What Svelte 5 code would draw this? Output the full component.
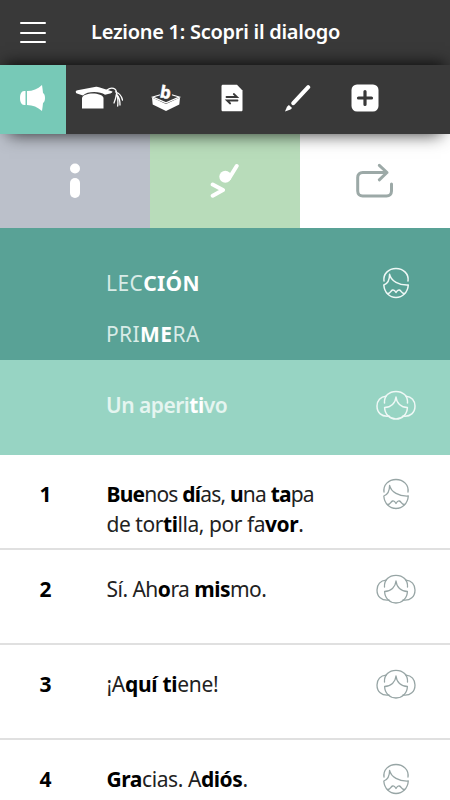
<script lang="ts">
  // Stressed syllables are wrapped in asterisks
  const rows = [
    {
      num: 1,
      who: 'man',
      lines: [
        { text: '*Bue*nos *dí*as, *u*na *ta*pa', tracking: -0.8 },
        { text: 'de tor*ti*lla, por fa*vor*.', tracking: -0.45 }
      ]
    },
    { num: 2, who: 'woman', lines: [{ text: 'Sí. Ah*o*ra *mis*mo.', tracking: -0.53 }] },
    { num: 3, who: 'woman', lines: [{ text: '¡A*quí ti*ene!', tracking: -0.3 }] },
    { num: 4, who: 'man', lines: [{ text: '*Gra*cias. A*diós*.', tracking: -0.42 }] }
  ];
</script>

{#snippet stressed(text: string)}
  {#each text.split('*') as part, i}{#if i % 2}<b>{part}</b>{:else}{part}{/if}{/each}
{/snippet}

{#snippet face(who: string)}
  <svg class="face" width="42" height="32" viewBox="0 0 42 32" aria-hidden="true">
    {#if who === 'man'}
      <path d="M9 14C8 7 13.500 1.500 21 1.500S34 7 33 14" />
      <path d="M14.600 7.300c0 5.500-2 9.500-5.800 10.700.6 7.500 5.700 12.500 12.200 12.500S32.700 25.500 33.300 18C24 18.500 16 14 14.600 7.300z" />
      <path d="M12.500 26.500c3.200 0 3-3 5.200-3.500 1.700-.3 2.300.6 3.300 2.500 1-1.900 1.600-2.800 3.300-2.500 2.200.5 2 3.500 5.200 3.500" />
    {:else}
      <path d="M9.500 14C9 7 14 2.400 21 2.400S33 7 32.500 14" />
      <path d="M21 8c-.5 6-5 10.300-11.400 10.500C9.800 25.500 15 30 21 30s11.200-4.500 11.400-11.500C26 18.300 21.500 14 21 8z" />
      <path d="M11 7.200C5.500 7.500 2 11.500 2 17c0 6.500 4.500 11 12 10" />
      <path d="M31 7.200c5.500.3 9 4.300 9 9.800 0 6.500-4.500 11-12 10" />
    {/if}
  </svg>
{/snippet}

<div class="app">
  <header>
    <button class="menu" aria-label="Menu"><span></span><span></span><span></span></button>
    <h1>Lezione 1: Scopri il dialogo</h1>
  </header>

  <nav>
    <button class="tab active" aria-label="Audio">
      <svg width="26" height="28" viewBox="0 0 26 28">
        <path d="M5.500 7v14H4c-2.500 0-4-3-4-7s1.500-7 4-7z" />
        <path d="M7 7c6 0 10.500-2 15-6 .5 3 .8 5.500 1 8 1.300.8 2 2.500 2 5s-.7 4.200-2 5c-.2 2.500-.5 5-1 8-4.500-4-9-6-15-6z" />
      </svg>
    </button>
    <button class="tab" aria-label="Lessons">
      <svg width="48" height="28" viewBox="0 0 48 28">
        <path d="M.8 7.500c0-.7.700-1 1.700-1.200L21 2.800c1-.2 2 0 3 .4l13.500 4.300c-.3 1.500-1.500 2-3.500 2.300l-4 1C25 7 12 7 8 11.500l-6-2c-1-.4-1.200-1-1.200-2z" />
        <path d="M7 24.500V14c1-6 20.500-6 21.500 0v10.500z" />
        <path class="thin" d="M32 6c4.500-3.500 9.500-2 9.700 3.500M41.500 9.500c-.5 4-1.200 6.500-2.500 9.500M41.700 9.500c1.300 4 1.500 7.500 1 12.500M42 11c2 2 3 5.500 3 10M40.500 8c3.500 1 6 4 7 8" />
      </svg>
    </button>
    <button class="tab" aria-label="Vocabulary">
      <svg class="box" width="30" height="28" viewBox="0 0 30 28">
        <path d="M1 13.500l14 6.500 14-6.500-.7 7L15 27 1.700 20.500z" />
        <path class="thin" d="M8.500 11L1.800 13l13.200 5.800L28.200 13l-6.700-2" />
        <text x="9" y="14.500" transform="rotate(10 15 9)">b</text>
      </svg>
    </button>
    <button class="tab" aria-label="Notes">
      <svg width="22" height="28" viewBox="0 0 22 28">
        <path d="M2 .8h14l5.500 5.700v19.200c0 1-.5 1.500-1.500 1.500H2c-1 0-1.500-.5-1.500-1.500V2.300C.5 1.300 1 .8 2 .8z" />
        <path class="ink" d="M5.500 13h10.500l-3.200-3M16.500 16.500H6l3.200 3" />
      </svg>
    </button>
    <button class="tab" aria-label="Exercises">
      <svg width="26" height="28" viewBox="0 0 26 28">
        <path class="pen" d="M8.300 19.200L23.200 3.200" />
        <path d="M3.900 21l3.200 2.900-1.600 1.600L0 27.500l2-4.700z" />
      </svg>
    </button>
    <button class="tab" aria-label="Add">
      <svg width="28" height="28" viewBox="0 0 28 28">
        <rect x=".5" y=".5" width="27" height="27" rx="5.500" />
        <path class="plus" d="M14 7.500v13M7.500 14h13" />
      </svg>
    </button>
  </nav>

  <div class="tools">
    <button class="tool info" aria-label="Info">
      <svg width="12" height="36" viewBox="0 0 12 36">
        <circle cx="6" cy="5.500" r="5" />
        <rect x="1" y="15" width="10" height="20" rx="5" />
      </svg>
    </button>
    <button class="tool listen" aria-label="Listen">
      <svg width="30" height="36" viewBox="0 0 30 36">
        <circle cx="15.300" cy="13.700" r="6" />
        <path d="M19 15.500L26.700 3M2.700 21.500L13 27 2.700 32.700" />
      </svg>
    </button>
    <button class="tool repeat" aria-label="Repeat">
      <svg width="38" height="36" viewBox="0 0 38 36">
        <path d="M31 9.500H6.700c-3 0-5 2-5 5V28c0 3 2 5 5 5h23.800c3 0 5-2 5-5v-7M23.300 2.300l7.700 7.200-7.700 7.300" />
      </svg>
    </button>
  </div>

  <main>
    <section class="title">
      <div class="text">
        <p>{@render stressed('LEC*CIÓN*')}</p>
        <p>{@render stressed('PRI*ME*RA')}</p>
      </div>
      {@render face('man')}
    </section>
    <section class="subtitle">
      <div class="text"><p>{@render stressed('Un aperi*ti*vo')}</p></div>
      {@render face('woman')}
    </section>
    {#each rows as row}
      <section class="row">
        <span class="num">{row.num}</span>
        <div class="text">
          {#each row.lines as line}
            <p style="letter-spacing: {line.tracking}px">{@render stressed(line.text)}</p>
          {/each}
        </div>
        {@render face(row.who)}
      </section>
    {/each}
  </main>
</div>

<style>
  :global(body) {
    overflow: hidden;
  }

  .app {
    display: flex;
    flex-direction: column;
    width: 100%;
    height: 800px;
    overflow: hidden;
    background: #fff;
    color: #222;
    font-family: "Noto Sans", "Open Sans", sans-serif;
  }

  button {
    padding: 0;
    border: 0;
    background: none;
    font-family: inherit;
  }

  header {
    display: flex;
    flex: none;
    align-items: center;
    height: 65px;
    background: #393939;
  }

  .menu {
    display: flex;
    flex-direction: column;
    gap: 7.5px;
    width: 26px;
    margin-left: 20px;
  }

  .menu span {
    height: 2px;
    border-radius: 1px;
    background: #fff;
  }

  h1 {
    margin: 0 0 2px 45px;
    color: #fff;
    font-size: 20px;
    font-weight: 600;
    letter-spacing: -0.27px;
    white-space: nowrap;
  }

  nav {
    position: relative;
    z-index: 1;
    display: flex;
    flex: none;
    height: 69px;
    background: #393939;
    box-shadow: 0 -7px 14px -5px rgba(0, 0, 0, 0.75), 0 10px 16px -9px rgba(0, 0, 0, 0.7);
  }

  .tab {
    display: flex;
    align-items: center;
    justify-content: center;
    width: 66.3px;
    padding-bottom: 3px;
  }

  .tab.active {
    background: #77c9b7;
  }

  .tab svg {
    flex: none;
    fill: #fff;
  }

  .tab .box {
    overflow: visible;
  }

  .tab text {
    font-size: 17px;
    font-weight: 700;
    stroke: #fff;
    stroke-width: 0.5;
  }

  .tab .thin,
  .tab .ink,
  .tab .pen,
  .tab .plus {
    fill: none;
    stroke: #fff;
    stroke-width: 1.3;
    stroke-linecap: round;
  }

  .tab .ink { stroke: #393939; stroke-width: 1.8; }
  .tab .pen { stroke-width: 4; }
  .tab .plus { stroke: #393939; stroke-width: 3.2; }

  .tools {
    display: flex;
    flex: none;
    height: 94px;
  }

  .tool {
    display: flex;
    flex: 1;
    align-items: center;
    justify-content: center;
  }

  .info { background: #bbc0ca; fill: #fff; }
  .listen { background: #b8dcba; fill: #fff; }
  .listen path { fill: none; stroke: #fff; stroke-width: 4; stroke-linecap: round; stroke-linejoin: round; }
  .repeat { background: #fff; fill: none; stroke: #9ca9a7; stroke-width: 3; stroke-linecap: round; stroke-linejoin: round; }

  section {
    display: flex;
    box-sizing: border-box;
    height: 95px;
    padding: 24px 33px 0 39.500px;
  }

  .num {
    width: 67px;
    color: #000;
    font-size: 21px;
    font-weight: 700;
    line-height: 30px;
  }

  .text {
    flex: 1;
    font-size: 21px;
    line-height: 30px;
    white-space: nowrap;
  }

  p {
    margin: 0;
  }

  b {
    color: #000;
    font-weight: 700;
  }

  .face {
    flex: none;
    fill: none;
    stroke: #97a5a5;
    stroke-width: 1.3;
    stroke-linecap: round;
    stroke-linejoin: round;
  }

  .title {
    height: 132px;
    padding: 40px 33px 0 106px;
    background: #59a296;
    color: #d8ebe7;
    letter-spacing: 0.4px;
  }

  .title p + p {
    margin-top: 21px;
  }

  .subtitle {
    height: 95px;
    padding: 30px 33px 0 106px;
    background: #97d4c3;
    color: #e5f5f0;
    font-weight: 600;
    letter-spacing: -0.5px;
  }

  .title b,
  .subtitle b {
    color: #fff;
  }

  .title .face,
  .subtitle .face {
    margin-top: -1px;
    stroke: #eff8f6;
    stroke-width: 1.5;
  }

  .row {
    border-bottom: 2px solid #e0e0e0;
  }

  .row .face {
    margin-top: -1px;
  }
</style>
